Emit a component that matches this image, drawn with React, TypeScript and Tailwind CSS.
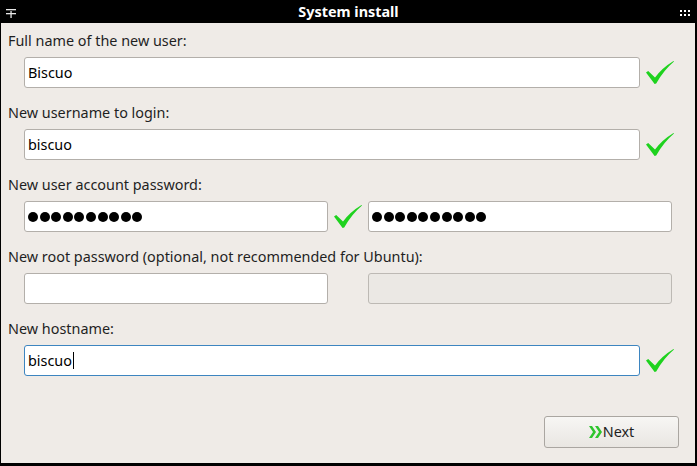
import React from "react";

const font = { fontFamily: '"Noto Sans", "Open Sans", sans-serif' };

function Check() {
  return (
    <svg width="30" height="26" viewBox="0 0 30 26" className="shrink-0">
      <path
        d="M1 12.5 L3.2 11 L10 17.5 Q17 8 28.5 1 L29 1.6 Q19 10 11.2 23.5 L9.6 24 Z"
        fill="#1ed21e"
      />
    </svg>
  );
}

function Dots() {
  return (
    <div className="flex items-center gap-[1.6px]">
      {Array.from({ length: 10 }).map((_, i) => (
        <span key={i} className="block h-[10px] w-[10px] rounded-full bg-black" />
      ))}
    </div>
  );
}

function Field({
  children,
  className = "",
  focused = false,
  disabled = false,
}: {
  children?: React.ReactNode;
  className?: string;
  focused?: boolean;
  disabled?: boolean;
}) {
  const border = focused
    ? "border-[#3d85c0]"
    : disabled
    ? "border-[#bdb9b4]"
    : "border-[#b3afaa]";
  const bg = disabled ? "bg-[#ebe8e4]" : "bg-white";
  return (
    <div
      className={`flex h-[31px] items-center rounded-[3px] border pl-[3px] text-[14.4px] text-black ${border} ${bg} ${className}`}
    >
      {children}
    </div>
  );
}

function Label({ text }: { text: string }) {
  return <div className="h-[18px] pl-[7px] text-[14.4px] leading-[18px] text-[#1f1f1f]">{text}</div>;
}

export default function App() {
  return (
    <div className="flex h-[466px] w-[697px] flex-col bg-black" style={font}>
      {/* Title bar */}
      <div className="relative flex h-[23px] shrink-0 items-center justify-center">
        <svg width="10" height="9" viewBox="0 0 10 9" className="absolute left-[6px] top-[9px]">
          <rect x="0" y="0" width="10" height="1.3" fill="#e8e8e8" />
          <rect x="0" y="4" width="10" height="1.3" fill="#e8e8e8" />
          <rect x="4.4" y="2" width="1.3" height="7" fill="#e8e8e8" />
        </svg>
        <span className="text-[14.4px] font-bold text-white">System install</span>
        <div className="absolute right-[7px] top-[10px] grid grid-cols-3 gap-x-[2px] gap-y-[2px]">
          {Array.from({ length: 6 }).map((_, i) => (
            <span key={i} className="block h-[2px] w-[2px] bg-white" />
          ))}
        </div>
      </div>

      {/* Content */}
      <div className="ml-[1px] mr-[2px] mb-[3px] flex flex-1 flex-col bg-[#efebe7] pt-[9px]">
        <Label text="Full name of the new user:" />
        <div className="mt-[7px] flex items-center pl-[23px]">
          <Field className="w-[616px]">Biscuo</Field>
          <div className="ml-[5px]">
            <Check />
          </div>
        </div>

        <div className="mt-[16px]">
          <Label text="New username to login:" />
        </div>
        <div className="mt-[7px] flex items-center pl-[23px]">
          <Field className="w-[616px]">biscuo</Field>
          <div className="ml-[5px]">
            <Check />
          </div>
        </div>

        <div className="mt-[16px]">
          <Label text="New user account password:" />
        </div>
        <div className="mt-[7px] flex items-center pl-[23px]">
          <Field className="w-[304px]">
            <Dots />
          </Field>
          <div className="ml-[5px] w-[35px]">
            <Check />
          </div>
          <Field className="w-[304px]">
            <Dots />
          </Field>
        </div>

        <div className="mt-[16px]">
          <Label text="New root password (optional, not recommended for Ubuntu):" />
        </div>
        <div className="mt-[7px] flex items-center pl-[23px]">
          <Field className="w-[304px]" />
          <div className="w-[40px]" />
          <Field className="w-[304px]" disabled />
        </div>

        <div className="mt-[16px]">
          <Label text="New hostname:" />
        </div>
        <div className="mt-[7px] flex items-center pl-[23px]">
          <Field className="w-[616px]" focused>
            biscuo
            <span className="ml-[1px] inline-block h-[17px] w-[1px] bg-black" />
          </Field>
          <div className="ml-[5px]">
            <Check />
          </div>
        </div>

        <div className="mt-[40px] flex justify-end pr-[16px]">
          <button className="flex h-[32px] w-[135px] items-center justify-center rounded-[3px] border border-[#aaa6a1] bg-gradient-to-b from-[#f7f6f4] to-[#e9e6e2] text-[14.4px] text-[#1e1e1e]">
            <svg width="13" height="12" viewBox="0 0 13 12" className="mr-[1px]">
              <path d="M0 0 H3 L7 6 L3 12 H0 L4 6 Z" fill="#2ec52e" />
              <path d="M6 0 H9 L13 6 L9 12 H6 L10 6 Z" fill="#2ec52e" />
            </svg>
            Next
          </button>
        </div>
      </div>
    </div>
  );
}
